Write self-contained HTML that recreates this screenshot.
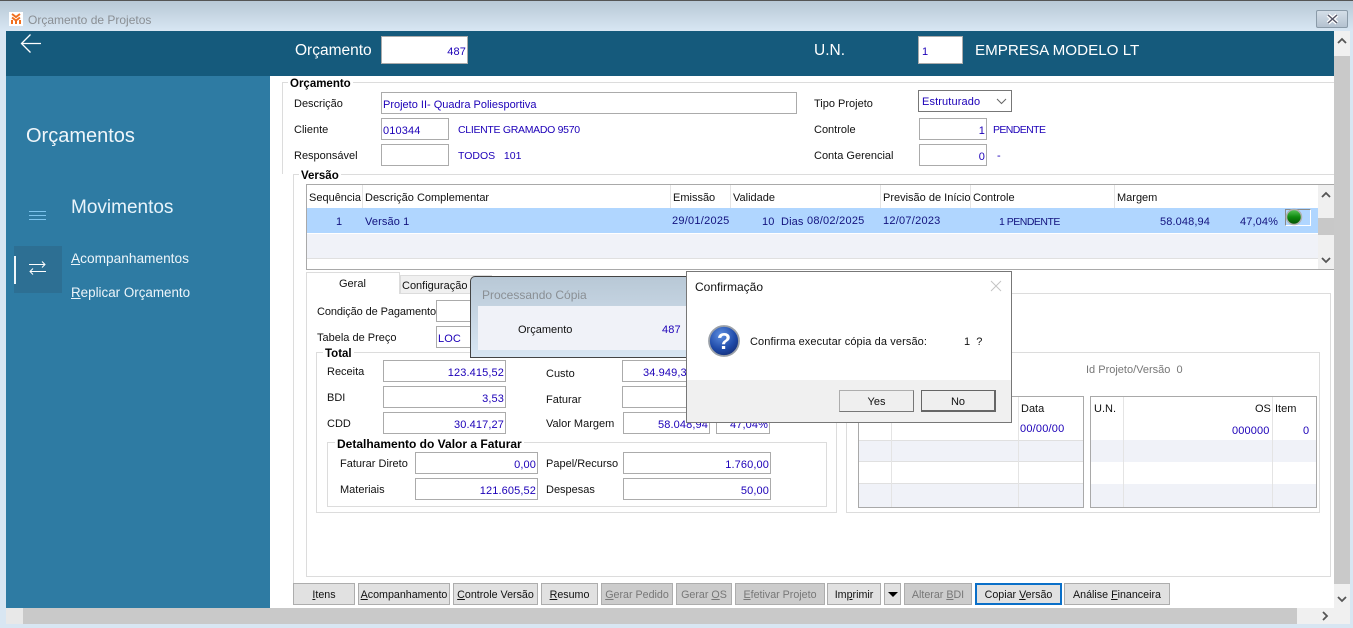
<!DOCTYPE html>
<html lang="pt"><head><meta charset="utf-8"><title>Orçamento de Projetos</title>
<style>
html,body{margin:0;padding:0;width:1353px;height:628px;overflow:hidden;background:#d8e6f2}
body{position:relative;font:11px "Liberation Sans",sans-serif;color:#111}
div,span.a{position:absolute;box-sizing:border-box}
.r{background:#fff}
.t{white-space:nowrap;line-height:14px;height:14px;margin-top:1px}
.v{white-space:nowrap;line-height:14px;height:14px;color:#1c00b8;margin-top:1px;letter-spacing:.12px}
.c{font-size:10.500px;letter-spacing:-.3px}
.b{font-weight:bold;font-size:11.5px;background:#fff;padding:0 2px;white-space:nowrap;line-height:12px;height:12px;color:#000;margin-top:1px}
.i{background:#fff;border:1px solid #ababab;color:#1c00b8;line-height:20px;padding:2px 1px 0 1px;white-space:nowrap;text-align:right;height:22px;letter-spacing:.12px}
.l{text-align:left}
.g{border:1px solid #dcdcdc}
.h{background:#e4e4e4}
.w{color:#fff;white-space:nowrap}
.btn{top:583px;height:22px;background:#e1e1e1;border:1px solid #adadad;text-align:center;line-height:22px;white-space:nowrap;color:#111;font-size:10.7px}
.dis{background:#ccc;color:#777}
.dlg{height:22px;text-align:center;line-height:22px;background:#efefef;border:1px solid #adadad;border-right-color:#777;border-bottom-color:#777}
</style></head><body>
<!-- window frame -->
<div style="left:0;top:0;width:1353px;height:31px;background:linear-gradient(#b8c8d6,#d8e6f3);border-top:1px solid #555"></div>
<div style="left:9px;top:12px;width:14px;height:14px;background:#fff"></div>
<svg style="position:absolute;left:9px;top:12px" width="14" height="14" viewBox="0 0 14 14"><path d="M3 2l4 3 4-3M3 5.500l4 3 4-3M3 12V8M11 12V8M7 12V9" stroke="#f07020" stroke-width="2" fill="none"/></svg>
<div class="t" style="left:28px;top:12px;color:#8a8f94;font-size:12px">Orçamento de Projetos</div>
<div style="left:1316px;top:10px;width:32px;height:18px;border:1px solid #8a9aa8;border-radius:2px;background:linear-gradient(#d4dee8,#b4c2d0)"></div>
<svg style="position:absolute;left:1326px;top:13px" width="13" height="12" viewBox="0 0 13 12"><path d="M2 2l9 8M11 2l-9 8" stroke="#fff" stroke-width="4"/><path d="M2 2l9 8M11 2l-9 8" stroke="#556" stroke-width="1.500"/></svg>

<!-- scrollbars -->
<div style="left:1334px;top:31px;width:16px;height:577px;background:#c9c9c9"></div>
<div style="left:1334px;top:31px;width:16px;height:25px;background:#f0f0f0"></div>
<div style="left:1334px;top:584px;width:16px;height:24px;background:#f0f0f0"></div>
<svg style="position:absolute;left:1336px;top:36px" width="12" height="10" viewBox="0 0 12 10"><path d="M2 7l4-4 4 4" stroke="#555" stroke-width="1.800" fill="none"/></svg>
<svg style="position:absolute;left:1336px;top:594px" width="12" height="10" viewBox="0 0 12 10"><path d="M2 3l4 4 4-4" stroke="#555" stroke-width="1.800" fill="none"/></svg>
<div style="left:6px;top:608px;width:1328px;height:16px;background:#c9c9c9"></div>
<div style="left:6px;top:608px;width:17px;height:16px;background:#e8e8e8"></div>
<div style="left:1297px;top:608px;width:37px;height:16px;background:#f0f0f0"></div>
<div style="left:1334px;top:608px;width:16px;height:16px;background:#f0f0f0"></div>
<svg style="position:absolute;left:1319px;top:610px" width="12" height="12" viewBox="0 0 12 12"><path d="M4 2l4 4-4 4" stroke="#555" stroke-width="1.800" fill="none"/></svg>

<!-- main -->
<div class="r" style="left:270px;top:76px;width:1064px;height:532px"></div>
<div style="left:6px;top:31px;width:1328px;height:45px;background:#155a7c"></div>
<div style="left:6px;top:76px;width:264px;height:532px;background:#2e7ba3"></div>
<svg style="position:absolute;left:20px;top:33px" width="22" height="22" viewBox="0 0 22 22"><path d="M1.500 10.500H21M10.500 1.500l-9 9 9 9" stroke="#fff" stroke-width="1.300" fill="none"/></svg>
<div class="w" style="left:295px;top:40px;font-size:15.5px;line-height:22px">Orçamento</div>
<div class="i" style="left:381px;top:36px;width:87px;height:28px;line-height:26px">487</div>
<div class="w" style="left:814px;top:40px;font-size:15.5px;line-height:22px">U.N.</div>
<div class="i l" style="left:918px;top:36px;width:45px;height:28px;line-height:26px;padding-left:3px">1</div>
<div class="w" style="left:975px;top:40px;font-size:15.2px;line-height:22px;width:165px;overflow:hidden">EMPRESA MODELO LTDA</div>

<!-- sidebar -->
<div class="w" style="left:26px;top:123px;font-size:20px;line-height:26px;color:#f0f6fa">Orçamentos</div>
<div class="w" style="left:71px;top:196px;font-size:19px;line-height:24px;color:#e8f4fb">Movimentos</div>
<svg style="position:absolute;left:28px;top:210px" width="19" height="12"><path d="M1 1.500h17M1 5.500h17M1 9.500h17" stroke="#7cc4ee"/></svg>
<div style="left:14px;top:246px;width:48px;height:47px;background:#2d6f93"></div>
<div style="left:14px;top:256px;width:2px;height:28px;background:#f0f6fa"></div>
<svg style="position:absolute;left:28px;top:260px" width="19" height="16" viewBox="0 0 19 16"><path d="M1 4.500h16M14 1.500l3 3-3 3M18 11.500H2M5 8.500l-3 3 3 3" stroke="#fff" fill="none"/></svg>
<div class="w" style="left:71px;top:250px;font-size:13.700px;line-height:17px;color:#edf5fa"><u>A</u>companhamentos</div>
<div class="w" style="left:71px;top:284px;font-size:13.400px;line-height:17px;color:#edf5fa"><u>R</u>eplicar Orçamento</div>

<!-- group Orçamento -->
<div class="g" style="left:282px;top:82px;width:1052px;height:92px;border-bottom:0;border-right:0"></div>
<div class="b" style="left:288px;top:77px">Orçamento</div>
<div class="t" style="left:294px;top:96px">Descrição</div>
<div class="i l" style="left:381px;top:92px;width:416px;letter-spacing:0">Projeto II- Quadra Poliesportiva</div>
<div class="t" style="left:294px;top:122px">Cliente</div>
<div class="i l" style="left:381px;top:118px;width:68px">010344</div>
<div class="v c" style="left:458px;top:122px">CLIENTE GRAMADO 9570</div>
<div class="t" style="left:294px;top:148px">Responsável</div>
<div class="i" style="left:381px;top:144px;width:68px"></div>
<div class="v c" style="left:458px;top:148px;letter-spacing:0">TODOS&nbsp;&nbsp;&nbsp;101</div>
<div class="t" style="left:814px;top:96px">Tipo Projeto</div>
<div class="i l" style="left:918px;top:90px;width:94px;border-color:#777;padding:1px 0 0 3px">Estruturado</div>
<svg style="position:absolute;left:996px;top:98px" width="11" height="7"><path d="M1 1l4.500 4.500L10 1" stroke="#666" fill="none"/></svg>
<div class="t" style="left:814px;top:122px">Controle</div>
<div class="i" style="left:919px;top:118px;width:68px">1</div>
<div class="v c" style="left:993px;top:122px;letter-spacing:-.6px">PENDENTE</div>
<div class="t" style="left:814px;top:148px">Conta Gerencial</div>
<div class="i" style="left:919px;top:144px;width:68px">0</div>
<div class="v" style="left:997px;top:148px">-</div>

<!-- group Versão -->
<div class="g" style="left:293px;top:174px;width:1041px;height:430px;border-right:0;border-bottom:0"></div>
<div class="b" style="left:299px;top:169px">Versão</div>
<div style="left:306px;top:184px;width:1028px;height:86px;border:1px solid #a9a9a9;border-right:0;background:#fff"></div>
<div class="t" style="left:309px;top:190px">Sequência</div>
<div class="t" style="left:365px;top:190px">Descrição Complementar</div>
<div class="t" style="left:673px;top:190px">Emissão</div>
<div class="t" style="left:733px;top:190px">Validade</div>
<div class="t" style="left:883px;top:190px">Previsão de Início</div>
<div class="t" style="left:973px;top:190px">Controle</div>
<div class="t" style="left:1117px;top:190px">Margem</div>
<div class="h" style="left:362px;top:185px;width:1px;height:23px"></div>
<div class="h" style="left:670px;top:185px;width:1px;height:23px"></div>
<div class="h" style="left:730px;top:185px;width:1px;height:23px"></div>
<div class="h" style="left:880px;top:185px;width:1px;height:23px"></div>
<div class="h" style="left:970px;top:185px;width:1px;height:23px"></div>
<div class="h" style="left:1114px;top:185px;width:1px;height:23px"></div>
<div style="left:307px;top:208px;width:1011px;height:25px;background:#b0d6ff"></div>
<div style="left:307px;top:234px;width:1011px;height:25px;background:#f0f2f8;border-bottom:1px solid #e0e0e0"></div>
<div class="v" style="left:336px;top:214px;color:#12127e">1</div>
<div class="v" style="left:365px;top:214px;color:#12127e">Versão 1</div>
<div class="v" style="left:672px;top:213px;color:#12127e;letter-spacing:.25px">29/01/2025</div>
<div class="v" style="left:762px;top:214px;color:#12127e">10</div>
<div class="v" style="left:781px;top:214px;color:#12127e">Dias</div>
<div class="v" style="left:807px;top:213px;color:#12127e;letter-spacing:.25px">08/02/2025</div>
<div class="v" style="left:883px;top:213px;color:#12127e;letter-spacing:.25px">12/07/2023</div>
<div class="v c" style="left:999px;top:214px;color:#12127e;letter-spacing:-.5px">1 PENDENTE</div>
<div class="v" style="left:1160px;top:214px;color:#12127e">58.048,94</div>
<div class="v" style="left:1240px;top:214px;color:#12127e">47,04%</div>
<div style="left:1285px;top:209px;width:26px;height:17px;border:1px solid #fff;border-top-color:#8a8a8a;border-left-color:#8a8a8a"></div>
<svg style="position:absolute;left:1285px;top:208px" width="18" height="18" viewBox="0 0 18 18"><defs><linearGradient id="gg" x1="0" y1="0" x2="0" y2="1"><stop offset="0" stop-color="#5cc65c"/><stop offset=".5" stop-color="#0f8a0f"/><stop offset="1" stop-color="#034f03"/></linearGradient></defs><circle cx="9" cy="9" r="7.500" fill="url(#gg)" stroke="#b0b0b0" stroke-width="1.500"/></svg>
<div style="left:1318px;top:185px;width:16px;height:84px;background:#f0f0f0"></div>
<div style="left:1318px;top:218px;width:16px;height:17px;background:#c8c8c8"></div>
<svg style="position:absolute;left:1320px;top:190px" width="12" height="10" viewBox="0 0 12 10"><path d="M2 7l4-4 4 4" stroke="#555" stroke-width="1.800" fill="none"/></svg>
<svg style="position:absolute;left:1320px;top:255px" width="12" height="10" viewBox="0 0 12 10"><path d="M2 3l4 4 4-4" stroke="#555" stroke-width="1.800" fill="none"/></svg>

<!-- tabs -->
<div style="left:306px;top:293px;width:1025px;height:284px;border:1px solid #dcdcdc;background:#fff"></div>
<div style="left:400px;top:275px;width:92px;height:19px;background:#f0f0f0;border:1px solid #dcdcdc"></div>
<div style="left:306px;top:272px;width:94px;height:22px;background:#fff;border:1px solid #dcdcdc;border-bottom:0"></div>
<div class="t" style="left:339px;top:276px">Geral</div>
<div class="t" style="left:402px;top:278px">Configuração</div>
<div class="t" style="left:317px;top:304px;letter-spacing:-.1px">Condição de Pagamento</div>
<div class="i" style="left:436px;top:300px;width:60px"></div>
<div class="t" style="left:317px;top:330px">Tabela de Preço</div>
<div class="i l" style="left:436px;top:326px;width:60px">LOC</div>

<!-- Total -->
<div class="g" style="left:316px;top:352px;width:521px;height:161px"></div>
<div class="b" style="left:323px;top:347px">Total</div>
<div class="t" style="left:327px;top:364px">Receita</div>
<div class="i" style="left:383px;top:360px;width:123px">123.415,52</div>
<div class="t" style="left:327px;top:390px">BDI</div>
<div class="i" style="left:383px;top:386px;width:123px">3,53</div>
<div class="t" style="left:327px;top:416px">CDD</div>
<div class="i" style="left:383px;top:412px;width:123px">30.417,27</div>
<div class="t" style="left:546px;top:366px">Custo</div>
<div class="i" style="left:622px;top:360px;width:88px;text-align:left;padding-left:20px">34.949,31</div>
<div class="t" style="left:546px;top:392px">Faturar</div>
<div class="i" style="left:622px;top:386px;width:88px"></div>
<div class="t" style="left:546px;top:416px">Valor Margem</div>
<div class="i" style="left:623px;top:412px;width:87px">58.048,94</div>
<div class="i" style="left:716px;top:412px;width:54px">47,04%</div>
<div class="g" style="left:327px;top:442px;width:500px;height:65px"></div>
<div class="b" style="left:335px;top:437px;font-size:12px">Detalhamento do Valor a Faturar</div>
<div class="t" style="left:340px;top:456px">Faturar Direto</div>
<div class="i" style="left:415px;top:452px;width:123px">0,00</div>
<div class="t" style="left:340px;top:482px">Materiais</div>
<div class="i" style="left:415px;top:478px;width:123px">121.605,52</div>
<div class="t" style="left:546px;top:456px">Papel/Recurso</div>
<div class="i" style="left:623px;top:452px;width:148px">1.760,00</div>
<div class="t" style="left:546px;top:482px">Despesas</div>
<div class="i" style="left:623px;top:478px;width:148px">50,00</div>

<!-- right group -->
<div class="g" style="left:846px;top:352px;width:474px;height:161px"></div>
<div class="t" style="left:1086px;top:362px;color:#777">Id Projeto/Versão&nbsp;&nbsp;0</div>
<div style="left:858px;top:396px;width:226px;height:112px;border:1px solid #a9a9a9;background:#fff"></div>
<div style="left:859px;top:440px;width:224px;height:22px;background:#f0f2f8;border-top:1px solid #e0e0e0;border-bottom:1px solid #e0e0e0"></div>
<div style="left:859px;top:483px;width:224px;height:24px;background:#f0f2f8;border-top:1px solid #e0e0e0"></div>
<div class="h" style="left:891px;top:397px;width:1px;height:110px"></div>
<div class="h" style="left:1018px;top:397px;width:1px;height:110px"></div>
<div class="t" style="left:1021px;top:401px">Data</div>
<div class="v" style="left:1020px;top:421px;letter-spacing:.2px">00/00/00</div>
<div style="left:1090px;top:396px;width:227px;height:112px;border:1px solid #a9a9a9;background:#fff"></div>
<div style="left:1091px;top:440px;width:225px;height:22px;background:#f0f2f8"></div>
<div style="left:1091px;top:484px;width:225px;height:23px;background:#f0f2f8"></div>
<div class="h" style="left:1123px;top:397px;width:1px;height:110px"></div>
<div class="h" style="left:1272px;top:397px;width:1px;height:110px"></div>
<div class="t" style="left:1094px;top:401px">U.N.</div>
<div class="t" style="left:1255px;top:401px">OS</div>
<div class="t" style="left:1275px;top:401px">Item</div>
<div class="v" style="left:1232px;top:423px">000000</div>
<div class="v" style="left:1303px;top:423px">0</div>

<!-- buttons -->
<div class="btn" style="left:293px;width:62px"><u>I</u>tens</div>
<div class="btn" style="left:358px;width:92px"><u>A</u>companhamento</div>
<div class="btn" style="left:453px;width:85px"><u>C</u>ontrole Versão</div>
<div class="btn" style="left:541px;width:57px"><u>R</u>esumo</div>
<div class="btn dis" style="left:601px;width:72px"><u>G</u>erar Pedido</div>
<div class="btn dis" style="left:676px;width:56px">Gerar <u>O</u>S</div>
<div class="btn dis" style="left:735px;width:90px"><u>E</u>fetivar Projeto</div>
<div class="btn" style="left:827px;width:54px">Im<u>p</u>rimir</div>
<div class="btn" style="left:884px;width:17px"></div>
<svg style="position:absolute;left:888px;top:592px" width="10" height="6"><path d="M0 0h10L5 5z" fill="#000"/></svg>
<div class="btn dis" style="left:904px;width:68px">Alterar <u>B</u>DI</div>
<div class="btn" style="left:975px;width:87px;border:2px solid #0a6fc8;line-height:20px">Copiar <u>V</u>ersão</div>
<div class="btn" style="left:1064px;width:106px">Análise <u>F</u>inanceira</div>

<!-- processing window -->
<div style="left:470px;top:276px;width:225px;height:82px;border:1px solid #444;border-radius:5px 0 0 0;background:linear-gradient(#b8c8d6,#d8e6f3)"></div>
<div class="t" style="left:482px;top:287px;color:#8a8f94;font-size:12px">Processando Cópia</div>
<div style="left:478px;top:306px;width:215px;height:44px;background:#f0f2f8"></div>
<div class="t" style="left:518px;top:322px">Orçamento</div>
<div class="v" style="left:662px;top:322px">487</div>

<!-- confirm dialog -->
<div style="left:686px;top:271px;width:326px;height:152px;background:#fff;border:1px solid #777"></div>
<div style="left:687px;top:380px;width:324px;height:42px;background:#f0f0f0"></div>
<div class="t" style="left:695px;top:279px;font-size:12px">Confirmação</div>
<svg style="position:absolute;left:990px;top:280px" width="12" height="12"><path d="M1 1l10 10M11 1L1 11" stroke="#c4c4c4"/></svg>
<svg style="position:absolute;left:708px;top:325px" width="32" height="32" viewBox="0 0 32 32"><defs><radialGradient id="qb" cx=".4" cy=".3" r=".8"><stop offset="0" stop-color="#5d8ee0"/><stop offset=".6" stop-color="#1f4aa8"/><stop offset="1" stop-color="#12286e"/></radialGradient></defs><circle cx="16" cy="16" r="15" fill="url(#qb)" stroke="#9aa0a8" stroke-width="1.800"/><text x="16" y="24" text-anchor="middle" font-family="Liberation Sans,sans-serif" font-weight="bold" font-size="23" fill="#fff">?</text></svg>
<div class="t" style="left:750px;top:334px;letter-spacing:.1px">Confirma executar cópia da versão:</div>
<div class="t" style="left:964px;top:334px">1&nbsp;&nbsp;?</div>
<div class="dlg" style="left:839px;top:390px;width:75px">Yes</div>
<div class="dlg" style="left:921px;top:390px;width:75px;border:1px solid #666;border-right-width:2px;border-bottom-width:2px">No</div>
</body></html>
